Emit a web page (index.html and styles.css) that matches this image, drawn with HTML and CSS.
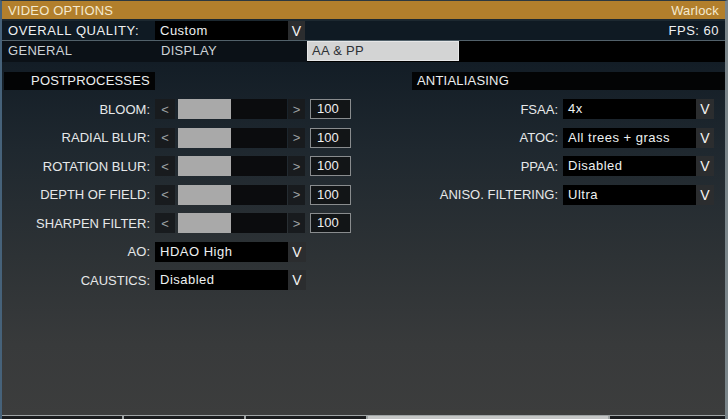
FILE: index.html
```html
<!DOCTYPE html>
<html>
<head>
<meta charset="utf-8">
<link rel="stylesheet" href="styles.css">
</head>
<body>
<div class="app">
  <div class="titlebar">
    <span>VIDEO OPTIONS</span>
    <span>Warlock</span>
  </div>
  <div class="qualitybar">
    <span class="qlabel">OVERALL QUALITY:</span>
    <div class="select"><span class="sel-val">Custom</span><span class="sel-btn">V</span></div>
    <span class="fps">FPS: 60</span>
  </div>
  <div class="tabs">
    <div class="tab">GENERAL</div>
    <div class="tab">DISPLAY</div>
    <div class="tab active">AA &amp; PP</div>
    <div class="tab-rest"></div>
  </div>
  <div class="content">
    <div class="col">
      <div class="head head-left">POSTPROCESSES</div>
      <div class="rows">
        <div class="row"><span class="label">BLOOM:</span><div class="slider"><span class="arrow">&lt;</span><span class="track"><span class="fill" style="width:53px"></span></span><span class="arrow arrow-r">&gt;</span><span class="value">100</span></div></div>
        <div class="row"><span class="label">RADIAL BLUR:</span><div class="slider"><span class="arrow">&lt;</span><span class="track"><span class="fill" style="width:53px"></span></span><span class="arrow arrow-r">&gt;</span><span class="value">100</span></div></div>
        <div class="row"><span class="label">ROTATION BLUR:</span><div class="slider"><span class="arrow">&lt;</span><span class="track"><span class="fill" style="width:53px"></span></span><span class="arrow arrow-r">&gt;</span><span class="value">100</span></div></div>
        <div class="row"><span class="label">DEPTH OF FIELD:</span><div class="slider"><span class="arrow">&lt;</span><span class="track"><span class="fill" style="width:53px"></span></span><span class="arrow arrow-r">&gt;</span><span class="value">100</span></div></div>
        <div class="row"><span class="label">SHARPEN FILTER:</span><div class="slider"><span class="arrow">&lt;</span><span class="track"><span class="fill" style="width:53px"></span></span><span class="arrow arrow-r">&gt;</span><span class="value">100</span></div></div>
        <div class="row"><span class="label">AO:</span><div class="select"><span class="sel-val">HDAO High</span><span class="sel-btn">V</span></div></div>
        <div class="row"><span class="label">CAUSTICS:</span><div class="select"><span class="sel-val">Disabled</span><span class="sel-btn">V</span></div></div>
      </div>
    </div>
    <div class="col">
      <div class="head head-right">ANTIALIASING</div>
      <div class="rows">
        <div class="row"><span class="label label-r">FSAA:</span><div class="select"><span class="sel-val">4x</span><span class="sel-btn">V</span></div></div>
        <div class="row"><span class="label label-r">ATOC:</span><div class="select"><span class="sel-val">All trees + grass</span><span class="sel-btn">V</span></div></div>
        <div class="row"><span class="label label-r">PPAA:</span><div class="select"><span class="sel-val">Disabled</span><span class="sel-btn">V</span></div></div>
        <div class="row"><span class="label label-r">ANISO. FILTERING:</span><div class="select"><span class="sel-val">Ultra</span><span class="sel-btn">V</span></div></div>
      </div>
    </div>
  </div>
  <div class="footer">
    <span class="ft"></span><span class="ft"></span><span class="ft"></span><span class="ft ft-light"></span><span class="ft ft-last"></span>
  </div>
</div>
</body>
</html>
```
FILE: styles.css
```css
* { box-sizing: border-box; }
html, body { margin: 0; padding: 0; background: #2a3238; }
body {
  font-family: "Liberation Sans", Arial, sans-serif;
  font-size: 13px;
  color: #e4e6e7;
}
.app {
  width: 728px;
  height: 419px;
  display: flex;
  flex-direction: column;
  border-top: 1px solid #2c3840;
  border-left: 2px solid #46627a;
  border-right: 3px solid #7a858a;
  background: #1c2830;
  overflow: hidden;
}
.titlebar {
  height: 18px;
  flex: none;
  background: #b27f2c;
  color: #f4ead0;
  display: flex;
  justify-content: space-between;
  align-items: center;
  padding: 0 6px 0 6px;
  margin-bottom: 2px;
  letter-spacing: 0.2px;
}
.qualitybar {
  height: 20px;
  flex: none;
  background: #0f1a23;
  border-bottom: 1px solid #52616a;
  display: flex;
  align-items: center;
  padding-right: 6px;
}
.qlabel {
  width: 153px;
  padding-left: 6px;
  letter-spacing: 0.6px;
  color: #eef0f1;
}
.fps { margin-left: auto; letter-spacing: 0.5px; color: #eef0f1; }
.tabs {
  height: 21px;
  flex: none;
  display: flex;
  background: #000;
}
.tab {
  width: 152px;
  padding-left: 6px;
  line-height: 20px;
  background: #0b1117;
  color: #cdd3d7;
  letter-spacing: 0.3px;
}
.tab:first-child { width: 153px; }
.tab.active {
  background: #d3d4d4;
  color: #2e3134;
  border: 1px solid #e6e7e7;
  line-height: 18px;
  height: 20px;
  padding-left: 4px;
}
.tab-rest { flex: 1; background: #000; margin-right: 2px; height: 20px; }
.content {
  flex: 1;
  display: grid;
  grid-template-columns: 408px 1fr;
  padding: 10px 0 0 2px;
  background: linear-gradient(180deg, #131d26 0%, #1f282f 25%, #2d3235 55%, #383a3b 80%, #3c3d3d 100%);
}
.col { display: flex; flex-direction: column; }
.head {
  height: 18px;
  line-height: 18px;
  background: #030405;
  color: #eceeef;
  letter-spacing: 0.2px;
  margin-bottom: 9px;
}
.head-left { width: 151px; text-align: right; padding-right: 5px; }
.head-right { padding-left: 5px; }
.rows { display: flex; flex-direction: column; gap: 8.5px; }
.row { display: flex; align-items: center; height: 20px; }
.label {
  width: 151px;
  text-align: right;
  padding-right: 5px;
  color: #e6e8e9;
  white-space: nowrap;
}
.slider { display: flex; align-items: stretch; height: 20px; }
.arrow {
  width: 20px;
  background: #181b1e;
  color: #9ea2a4;
  display: flex;
  align-items: center;
  justify-content: center;
  margin-right: 3px;
}
.arrow-r { width: 17px; margin-right: 5px; margin-left: 1px; }
.track { width: 109px; background: #0b0c0e; display: flex; }
.fill { background: #a9a9a9; height: 100%; }
.value {
  width: 41px;
  border: 1px solid #898c8e;
  background: #121517;
  color: #f0f0f0;
  padding-left: 6px;
  line-height: 18px;
}
.select { display: flex; height: 20px; }
.sel-val {
  width: 133px;
  background: #000;
  color: #eef0f1;
  padding-left: 5px;
  line-height: 20px;
  letter-spacing: 0.5px;
  white-space: nowrap;
}
.qualitybar .select { height: 19px; }
.qualitybar .sel-val { line-height: 19px; }
.sel-btn {
  width: 18px;
  background: #2b2d2f;
  color: #f4f4f4;
  font-size: 14px;
  display: flex;
  align-items: center;
  justify-content: center;
}
.qualitybar .sel-btn { width: 17px; }
.footer {
  height: 4px;
  flex: none;
  display: flex;
  border-top: 1px solid #9fa4a5;
  background: #9fa4a5;
  gap: 2px;
}
.ft { width: 120px; background: #1a1c1e; }
.ft-light { width: 240px; background: #c4c6c6; }
.ft-last { flex: 1; }
```
